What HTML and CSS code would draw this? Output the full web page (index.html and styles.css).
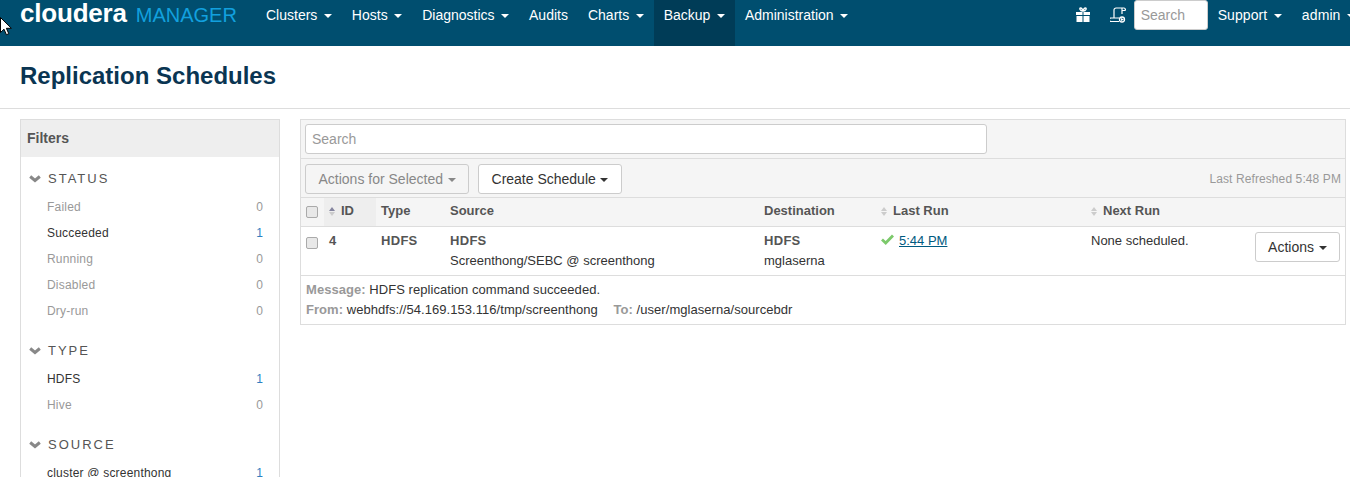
FILE: index.html
```html
<!DOCTYPE html>
<html lang="en">
<head>
    <meta charset="UTF-8">
    <meta name="viewport" content="width=device-width, initial-scale=1.0">
    <title>Replication Schedules</title>
    <link rel="stylesheet" href="styles.css">
</head>
<body>

    <!-- Top navigation -->
    <div class="navbar">
        <a class="brand"><span class="brand-name">cloudera</span><span class="brand-product">MANAGER</span></a>
        <a class="nav-link">Clusters<span class="caret"></span></a>
        <a class="nav-link">Hosts<span class="caret"></span></a>
        <a class="nav-link">Diagnostics<span class="caret"></span></a>
        <a class="nav-link">Audits</a>
        <a class="nav-link">Charts<span class="caret"></span></a>
        <a class="nav-link nav-active">Backup<span class="caret"></span></a>
        <a class="nav-link">Administration<span class="caret"></span></a>
        <div class="nav-right">
            <svg class="nav-icon" width="16" height="16" viewBox="0 0 16 16">
                <path fill="none" stroke="#fff" stroke-width="1.3" d="M7.5 4C5 4 4 1 5.500 1S7.500 3 7.500 4ZM8.500 4C11 4 12 1 10.500 1S8.500 3 8.500 4Z"/>
                <path fill="#fff" d="M1 5h6.500v3H1zM8.500 5H15v3H8.500zM1.500 9h6v6h-6zM8.500 9h6v6h-6z"/>
            </svg>
            <svg class="nav-icon nav-icon-last" width="16" height="16" viewBox="0 0 16 16">
                <path fill="none" stroke="#fff" stroke-width="1.2" d="M4 11V3a2 2 0 0 1 2-2h8a1.500 1.500 0 0 1 1 2.500h-3M12 1.500V7M1 14.500h8M1 14.500a1.700 1.700 0 0 1 0-3.500h8"/>
                <circle cx="12" cy="12.500" r="2.500" fill="none" stroke="#fff" stroke-width="1.300"/>
                <path fill="#fff" d="M11 11l3 1.500-3 1.500z"/>
            </svg>
            <input class="nav-search" type="text" placeholder="Search">
            <a class="nav-link">Support<span class="caret"></span></a>
            <a class="nav-link">admin<span class="caret"></span></a>
        </div>
    </div>

    <div class="page-header">
        <h1>Replication Schedules</h1>
    </div>

    <div class="content">

        <!-- Filters -->
        <div class="filters">
            <div class="filters-title">Filters</div>

            <div class="filter-group">
                <div class="group-title"><svg class="chevron" width="12" height="8" viewBox="0 0 12 8"><path fill="none" stroke="#888" stroke-width="3" d="M1.200 1.500 6 5.500l4.800-4"/></svg>STATUS</div>
                <div class="filter-row"><span>Failed</span><span>0</span></div>
                <div class="filter-row filter-on"><span>Succeeded</span><span class="filter-count">1</span></div>
                <div class="filter-row"><span>Running</span><span>0</span></div>
                <div class="filter-row"><span>Disabled</span><span>0</span></div>
                <div class="filter-row"><span>Dry-run</span><span>0</span></div>
            </div>

            <div class="filter-group">
                <div class="group-title"><svg class="chevron" width="12" height="8" viewBox="0 0 12 8"><path fill="none" stroke="#888" stroke-width="3" d="M1.200 1.500 6 5.500l4.800-4"/></svg>TYPE</div>
                <div class="filter-row filter-on"><span>HDFS</span><span class="filter-count">1</span></div>
                <div class="filter-row"><span>Hive</span><span>0</span></div>
            </div>

            <div class="filter-group">
                <div class="group-title"><svg class="chevron" width="12" height="8" viewBox="0 0 12 8"><path fill="none" stroke="#888" stroke-width="3" d="M1.200 1.500 6 5.500l4.800-4"/></svg>SOURCE</div>
                <div class="filter-row filter-on"><span>cluster @ screenthong</span><span class="filter-count">1</span></div>
            </div>
        </div>

        <!-- Schedules -->
        <div class="schedules">
            <div class="search-bar">
                <input class="search-input" type="text" placeholder="Search">
            </div>
            <div class="toolbar">
                <button class="btn btn-disabled">Actions for Selected<span class="caret"></span></button>
                <button class="btn">Create Schedule<span class="caret"></span></button>
                <span class="refreshed">Last Refreshed 5:48 PM</span>
            </div>
            <table class="schedule-table">
                <thead>
                    <tr>
                        <th class="col-check"><span class="check"></span></th>
                        <th class="col-id col-sorted"><span class="sort sort-up"></span>ID</th>
                        <th class="col-type">Type</th>
                        <th class="col-source">Source</th>
                        <th class="col-dest">Destination</th>
                        <th class="col-last"><span class="sort"></span>Last Run</th>
                        <th><span class="sort"></span>Next Run</th>
                    </tr>
                </thead>
                <tbody>
                    <tr>
                        <td><span class="check check-row"></span></td>
                        <td class="cell-id"><b>4</b></td>
                        <td><b>HDFS</b></td>
                        <td><b>HDFS</b><br>Screenthong/SEBC @ screenthong</td>
                        <td><b>HDFS</b><br>mglaserna</td>
                        <td>
                            <svg class="ok-icon" width="13" height="11" viewBox="0 0 13 11"><path fill="none" stroke="#7cc96b" stroke-width="2.800" d="M1 5.500 4.700 9 12 1.500"/></svg><a class="run-link">5:44 PM</a>
                        </td>
                        <td>
                            <button class="btn btn-row">Actions<span class="caret"></span></button>
                            None scheduled.
                        </td>
                    </tr>
                </tbody>
            </table>
            <div class="message">
                <div><b>Message:</b> HDFS replication command succeeded.</div>
                <div><b>From:</b> webhdfs://54.169.153.116/tmp/screenthong <b class="to-label">To:</b> /user/mglaserna/sourcebdr</div>
            </div>
        </div>

    </div>

    <!-- Mouse pointer caught in the screenshot -->
    <svg class="pointer" width="12" height="19" viewBox="0 0 12 19">
        <path fill="#fff" stroke="#000" d="M.5.500v15l3.500-3.300 2.400 5.500 2.400-1-2.400-5.400h5z"/>
    </svg>

</body>
</html>
```

FILE: styles.css
```css
html, body {
    height: 477px;
    overflow: hidden;
}
body {
    position: relative;
    margin: 0;
    font-family: "Liberation Sans", Arial, sans-serif;
    font-size: 13px;
    color: #333;
    background: #fff;
}
::placeholder {
    color: #999;
}

/* navbar */
.navbar {
    display: flex;
    align-items: flex-start;
    height: 46px;
    padding-left: 20px;
    background: #004e6f;
}
.brand {
    display: flex;
    align-items: baseline;
    width: 236px;
    height: 30px;
    line-height: 27px;
    white-space: nowrap;
}
.brand-name {
    font-size: 26px;
    font-weight: bold;
    color: #fff;
    letter-spacing: -0.2px;
}
.brand-product {
    margin-left: 9px;
    font-size: 20px;
    color: #12a0de;
}
.nav-link {
    height: 30px;
    padding: 0 10px;
    line-height: 30px;
    font-size: 14px;
    color: #fff;
}
.nav-active {
    height: 46px;
    background: #003c57;
}
.nav-right {
    display: flex;
    align-items: flex-start;
    margin-left: auto;
    margin-right: -15px;
}
.nav-right .nav-link {
    letter-spacing: 0.1px;
}
.nav-icon {
    margin: 7px 19px 0 0;
}
.nav-icon-last {
    margin-right: 8px;
}
.nav-search {
    box-sizing: border-box;
    width: 74px;
    height: 30px;
    padding: 0 6px;
    border: 1px solid #ccc;
    border-radius: 3px;
    font-family: inherit;
    font-size: 14px;
}
.caret {
    display: inline-block;
    margin-left: 6.5px;
    vertical-align: middle;
    border-top: 4px solid;
    border-left: 4px solid transparent;
    border-right: 4px solid transparent;
}

.page-header {
    height: 62px;
    border-bottom: 1px solid #ddd;
}
h1 {
    margin: 0;
    padding-left: 20px;
    font-size: 24px;
    line-height: 60px;
    color: #0a3552;
}

.content {
    display: flex;
    align-items: flex-start;
    gap: 20px;
    padding: 10px 4px 0 20px;
}

/* filters */
.filters {
    flex: none;
    box-sizing: border-box;
    width: 260px;
    height: 358px;
    overflow: hidden;
    border: 1px solid #ddd;
    border-bottom: none;
}
.filters-title {
    height: 37px;
    padding-left: 6px;
    line-height: 36px;
    font-size: 14px;
    font-weight: bold;
    color: #555;
    background: #eee;
}
.filter-group {
    padding: 8px 0 5px;
}
.group-title {
    height: 26px;
    margin-bottom: 3px;
    padding-left: 8px;
    line-height: 28px;
    color: #555;
    letter-spacing: 2px;
}
.chevron {
    margin-right: 7px;
}
.filter-row {
    display: flex;
    justify-content: space-between;
    height: 26px;
    padding: 0 16px 0 26px;
    line-height: 26px;
    font-size: 12px;
    letter-spacing: 0.2px;
    color: #999;
}
.filter-on {
    color: #333;
}
.filter-count {
    color: #2f7fc1;
}

/* schedules */
.schedules {
    flex: 1;
    border: 1px solid #ddd;
}
.search-bar {
    height: 39px;
    padding: 4px;
    box-sizing: border-box;
    border-bottom: 1px solid #ddd;
    background: #f5f5f5;
}
.search-input {
    box-sizing: border-box;
    width: 682px;
    height: 30px;
    padding: 0 6px;
    border: 1px solid #ccc;
    border-radius: 3px;
    font-family: inherit;
    font-size: 14px;
}
.toolbar {
    display: flex;
    align-items: center;
    gap: 9px;
    box-sizing: border-box;
    height: 39px;
    padding: 2px 4px 0;
    border-bottom: 1px solid #ddd;
    background: #f5f5f5;
}
.btn {
    height: 30px;
    padding: 0 12.5px;
    border: 1px solid #ccc;
    border-radius: 3px;
    font-family: inherit;
    font-size: 14px;
    color: #333;
    background: #fff;
}
.btn .caret {
    margin-left: 4.500px;
}
.btn-disabled {
    color: #888;
    background: #f5f5f5;
}
.refreshed {
    margin-left: auto;
    font-size: 12px;
    letter-spacing: 0.1px;
    color: #999;
}
.btn-row {
    float: right;
    margin-top: 1px;
}

/* table */
.schedule-table {
    width: 100%;
    table-layout: fixed;
    border-collapse: collapse;
}
.schedule-table th {
    box-sizing: border-box;
    height: 28px;
    padding: 0 5px 2px;
    border-bottom: 1px solid #ddd;
    text-align: left;
    color: #555;
    background: #f5f5f5;
}
.schedule-table td {
    box-sizing: border-box;
    height: 49px;
    padding: 4px 5px 0;
    border-bottom: 1px solid #ddd;
    vertical-align: top;
    line-height: 20px;
}
.schedule-table td b {
    color: #555;
    letter-spacing: 0.3px;
}
.col-check { width: 23px; }
.col-id { width: 52px; }
.col-type { width: 69px; }
.col-source { width: 314px; }
.col-dest { width: 117px; }
.col-last { width: 210px; }
.schedule-table th.col-sorted {
    background: #eee;
}
.check {
    display: inline-block;
    box-sizing: border-box;
    width: 12px;
    height: 12px;
    border: 1px solid #aaa;
    border-radius: 2px;
    background: #e8e8e8;
    vertical-align: middle;
}
.check-row {
    margin-top: 3px;
}
.sort {
    display: inline-block;
    margin-right: 6px;
    vertical-align: middle;
}
.sort::before,
.sort::after {
    content: "";
    display: block;
    border-left: 3px solid transparent;
    border-right: 3px solid transparent;
}
.sort::before {
    margin-bottom: 1px;
    border-bottom: 4px solid #ccc;
}
.sort::after {
    border-top: 4px solid #ccc;
}
.sort-up::before {
    border-bottom-color: #85859f;
}
.ok-icon {
    margin-right: 5px;
}
.run-link {
    color: #005a80;
    text-decoration: underline;
}

.message {
    height: 48px;
    padding: 4px 5px;
    box-sizing: border-box;
    line-height: 20px;
    letter-spacing: 0.05px;
}
.message b {
    color: #999;
}
.to-label {
    margin-left: 12px;
}

.pointer {
    position: absolute;
    left: 0;
    top: 17px;
}
```
